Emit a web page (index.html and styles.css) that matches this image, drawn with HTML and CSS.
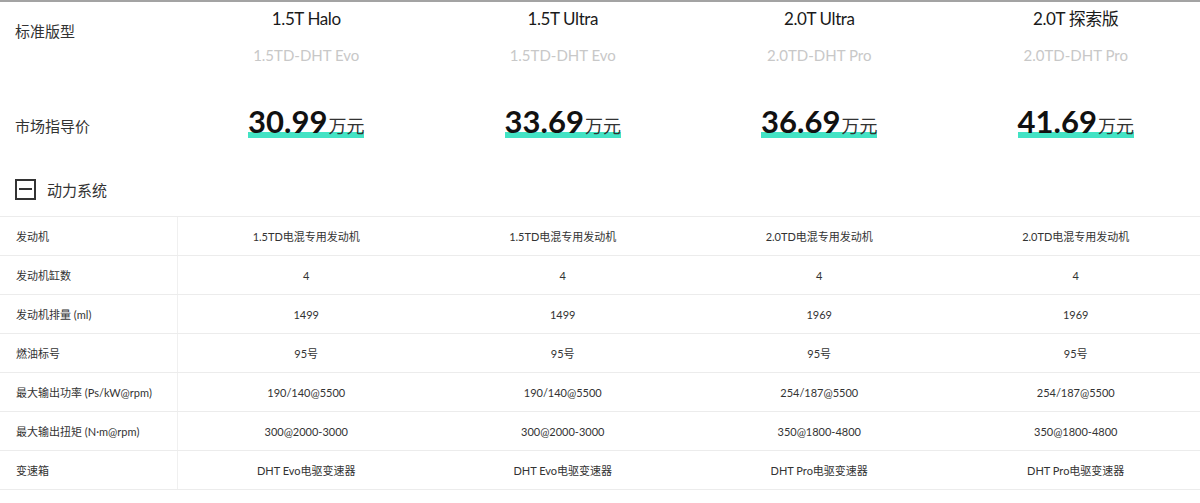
FILE: index.html
```html
<!DOCTYPE html>
<html lang="zh-CN">
<head>
<meta charset="utf-8">
<title>参数配置</title>
<link rel="stylesheet" href="styles.css">
</head>
<body>
<div class="topbar"></div>
<div class="page">
  <div class="grid models">
    <div class="label label-model">标准版型</div>
    <div class="model"><div class="model-name">1.5T Halo</div><div class="model-sub">1.5TD-DHT Evo</div></div>
    <div class="model"><div class="model-name">1.5T Ultra</div><div class="model-sub">1.5TD-DHT Evo</div></div>
    <div class="model"><div class="model-name">2.0T Ultra</div><div class="model-sub">2.0TD-DHT Pro</div></div>
    <div class="model"><div class="model-name">2.0T 探索版</div><div class="model-sub">2.0TD-DHT Pro</div></div>
  </div>
  <div class="grid prices">
    <div class="label label-price">市场指导价</div>
    <div class="price-cell"><span class="price">30.99<span class="unit">万元</span></span></div>
    <div class="price-cell"><span class="price">33.69<span class="unit">万元</span></span></div>
    <div class="price-cell"><span class="price">36.69<span class="unit">万元</span></span></div>
    <div class="price-cell"><span class="price">41.69<span class="unit">万元</span></span></div>
  </div>
  <div class="section">
    <span class="toggle"><span class="toggle-bar"></span></span>
    <span class="section-title">动力系统</span>
  </div>
  <div class="specs">
    <div class="grid row"><div class="cell-label">发动机</div><div class="cell">1.5TD电混专用发动机</div><div class="cell">1.5TD电混专用发动机</div><div class="cell">2.0TD电混专用发动机</div><div class="cell">2.0TD电混专用发动机</div></div>
    <div class="grid row"><div class="cell-label">发动机缸数</div><div class="cell">4</div><div class="cell">4</div><div class="cell">4</div><div class="cell">4</div></div>
    <div class="grid row"><div class="cell-label">发动机排量 (ml)</div><div class="cell">1499</div><div class="cell">1499</div><div class="cell">1969</div><div class="cell">1969</div></div>
    <div class="grid row"><div class="cell-label">燃油标号</div><div class="cell">95号</div><div class="cell">95号</div><div class="cell">95号</div><div class="cell">95号</div></div>
    <div class="grid row"><div class="cell-label">最大输出功率 (Ps/kW@rpm)</div><div class="cell">190/140@5500</div><div class="cell">190/140@5500</div><div class="cell">254/187@5500</div><div class="cell">254/187@5500</div></div>
    <div class="grid row"><div class="cell-label">最大输出扭矩 (N·m@rpm)</div><div class="cell">300@2000-3000</div><div class="cell">300@2000-3000</div><div class="cell">350@1800-4800</div><div class="cell">350@1800-4800</div></div>
    <div class="grid row"><div class="cell-label">变速箱</div><div class="cell">DHT Evo电驱变速器</div><div class="cell">DHT Evo电驱变速器</div><div class="cell">DHT Pro电驱变速器</div><div class="cell">DHT Pro电驱变速器</div></div>
  </div>
</div>
</body>
</html>
```

FILE: styles.css
```css
html, body {
  margin: 0;
  padding: 0;
  background: #fff;
  overflow-x: hidden;
}
body {
  font-family: "Lato", "Noto Sans CJK SC", sans-serif;
  color: #222;
}
.topbar {
  height: 2px;
  background: #a3a3a3;
}
.page {
  width: 1204px;
}
.grid {
  display: grid;
  grid-template-columns: 178px repeat(4, 256.5px);
}
.label {
  padding-left: 15px;
  font-size: 15px;
  line-height: 20px;
  color: #333;
}
.models {
  padding-top: 7px;
  height: 60px;
}
.label-model {
  padding-top: 12px;
}
.model {
  text-align: center;
}
.model-name {
  font-size: 17px;
  line-height: 20px;
  letter-spacing: -0.4px;
  color: #1a1a1a;
}
.model-sub {
  margin-top: 16px;
  font-size: 15px;
  line-height: 20px;
  color: #c8c8c8;
}
.prices {
  margin-top: 40px;
  height: 29px;
  align-items: center;
}
.label-price {
  padding-top: 4px;
}
.price-cell {
  display: flex;
  justify-content: center;
  align-items: flex-end;
  height: 29px;
}
.price {
  display: block;
  font-size: 31px;
  font-weight: 700;
  line-height: 23px;
  padding-top: 6px;
  color: #111;
  background: linear-gradient(to bottom, transparent calc(100% - 6px), #43e3c4 calc(100% - 6px));
}
.unit {
  font-size: 18px;
  font-weight: 400;
  color: #333;
  margin-left: 1px;
}
.section {
  display: flex;
  align-items: center;
  height: 54px;
  margin-top: 24px;
  padding-left: 15px;
  gap: 11px;
}
.toggle {
  box-sizing: border-box;
  width: 21px;
  height: 21px;
  border: 2px solid #333;
  display: flex;
  align-items: center;
  justify-content: center;
}
.toggle-bar {
  width: 13px;
  height: 2px;
  background: #333;
}
.section-title {
  font-size: 15px;
  color: #333;
}
.specs {
  border-bottom: 1px solid #ececec;
}
.row {
  height: 39px;
  border-top: 1px solid #ececec;
  box-sizing: border-box;
  font-size: 11px;
  color: #333;
}
.cell-label {
  padding-left: 16px;
  display: flex;
  align-items: center;
  border-right: 1px solid #f0f0f0;
}
.cell {
  display: flex;
  align-items: center;
  justify-content: center;
}
```
